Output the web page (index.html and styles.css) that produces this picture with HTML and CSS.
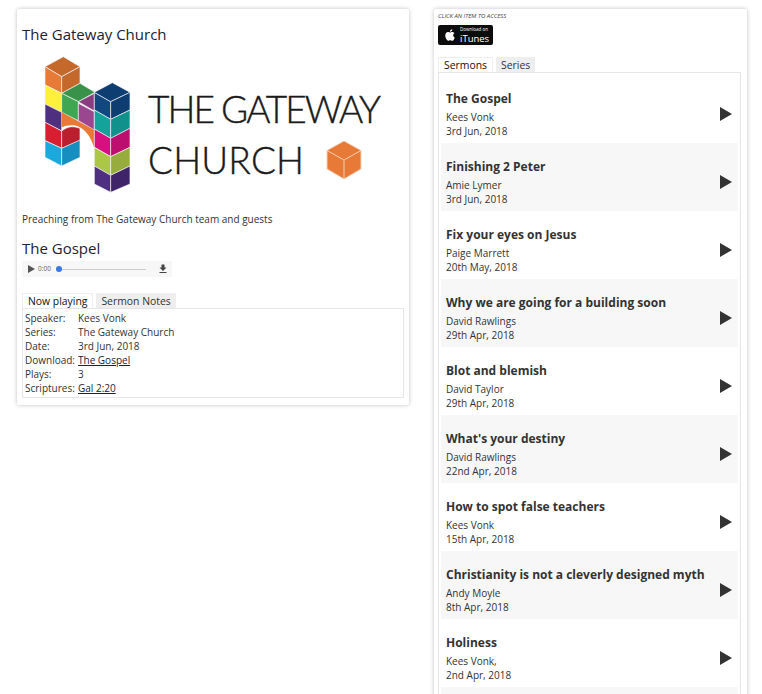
FILE: index.html
```html
<!DOCTYPE html>
<html lang="en">
<head>
    <meta charset="UTF-8">
    <meta name="viewport" content="width=device-width, initial-scale=1.0">
    <title>The Gateway Church - Sermons</title>
    <link rel="stylesheet" href="styles.css">
</head>
<body>
<div class="page">

    <div class="panel now-panel">
        <h2 class="church-title">The Gateway Church</h2>
        <svg class="logo" viewBox="0 0 382 146" width="382" height="146">
            <g transform="translate(13 0) scale(.3333)" stroke="#f4f4f4" stroke-width="2" stroke-linejoin="round">
                <polygon fill="#c4682c" points="30,50 85,20 135,50 80,80"/>
                <polygon fill="#e67a36" points="30,50 80,80 80,130 30,105"/>
                <polygon fill="#c4682c" points="80,80 135,50 135,100 80,130"/>
                <polygon fill="#fff03c" points="30,105 80,130 80,187 30,162"/>
                <polygon fill="#4e2f80" points="30,162 80,187 80,243 30,217"/>
                <polygon fill="#d71f31" points="30,217 80,243 80,295 30,272"/>
                <polygon fill="#1aa9dc" points="30,272 80,295 80,348 30,322"/>
                <path fill="#bb1e2c" d="M80 243 Q105 222 135 235 V272 L80 295 Z"/>
                <polygon fill="#168fc0" points="80,295 135,270 135,322 80,348"/>
                <polygon fill="#38924a" points="80,130 135,100 180,127 130,155"/>
                <polygon fill="#3fa651" points="80,130 130,155 130,212 80,187"/>
                <polygon fill="#8a3c80" points="130,155 178,130 178,183"/>
                <polygon fill="#9b478f" points="130,160 178,185 178,240 130,212"/>
                <path fill="#e67a36" stroke="none" d="M80 187 L178 240 V295 Q160 235 118 226 Q95 224 80 232 Z"/>
                <polygon fill="#12487f" points="178,127 227,155 227,208 178,180"/>
                <polygon fill="#0e3d71" points="178,127 232,98 285,127 227,155"/>
                <polygon fill="#0e3d71" points="227,155 285,127 285,180 227,208"/>
                <polygon fill="#14a39a" points="178,180 227,208 227,265 178,237"/>
                <polygon fill="#10918b" points="227,208 285,180 285,235 227,265"/>
                <polygon fill="#d80f7f" points="178,237 227,265 227,320 178,292"/>
                <polygon fill="#bb0e6e" points="227,265 285,235 285,292 227,320"/>
                <polygon fill="#abc746" points="178,292 227,320 227,376 178,348"/>
                <polygon fill="#96ad3e" points="227,320 285,292 285,348 227,376"/>
                <polygon fill="#4e2f80" points="178,348 227,376 227,427 178,402"/>
                <polygon fill="#3f2469" points="227,376 285,348 285,402 227,427"/>
            </g>
            <text class="logo-text" x="126" y="73" textLength="233">THE GATEWAY</text>
            <text class="logo-text" x="126" y="124" textLength="156">CHURCH</text>
            <g stroke="#f6cfb4" stroke-width="1" stroke-linejoin="round" fill="#e67a36">
                <polygon points="322,91 339,100.5 339,119 322,129 305,119 305,100.5"/>
                <path fill="none" d="M305 100.5 L322 110 L339 100.5 M322 110 V129"/>
            </g>
        </svg>
        <p class="blurb">Preaching from The Gateway Church team and guests</p>
        <h2 class="sermon-title">The Gospel</h2>
        <div class="player">
            <svg class="player-play" viewBox="0 0 8 9" width="7" height="8"><polygon points="0,0 8,4.5 0,9"/></svg>
            <span class="player-time">0:00</span>
            <div class="player-track"><span class="player-knob"></span></div>
            <svg class="player-dl" viewBox="0 0 24 24" width="12" height="12"><path d="M19 9h-4V3H9v6H5l7 7 7-7zM5 18v2h14v-2H5z"/></svg>
        </div>
        <div class="tabs now-tabs">
            <span class="tab active">Now playing</span>
            <span class="tab">Sermon Notes</span>
        </div>
        <div class="tab-body details">
            <table>
                <tr><td>Speaker:</td><td>Kees Vonk</td></tr>
                <tr><td>Series:</td><td>The Gateway Church</td></tr>
                <tr><td>Date:</td><td>3rd Jun, 2018</td></tr>
                <tr><td>Download:</td><td><a href="#">The Gospel</a></td></tr>
                <tr><td>Plays:</td><td>3</td></tr>
                <tr><td>Scriptures:</td><td><a href="#">Gal 2:20</a></td></tr>
            </table>
        </div>
    </div>

    <div class="panel list-panel">
        <div class="hint">CLICK AN ITEM TO ACCESS</div>
        <a class="itunes" href="#">
            <svg viewBox="0 0 24 24" width="14" height="14"><path d="M18.71 19.5c-.83 1.24-1.71 2.45-3.05 2.47-1.34.03-1.77-.79-3.29-.79-1.53 0-2 .77-3.27.82-1.31.05-2.3-1.32-3.14-2.53C4.25 17 2.94 12.45 4.7 9.39c.87-1.52 2.43-2.48 4.12-2.51 1.28-.02 2.5.87 3.29.87.78 0 2.26-1.07 3.81-.91.65.03 2.47.26 3.64 1.98-.09.06-2.17 1.28-2.15 3.81.03 3.02 2.65 4.03 2.68 4.04-.03.07-.42 1.44-1.38 2.83M13 3.5c.73-.83 1.94-1.46 2.94-1.5.13 1.17-.34 2.35-1.04 3.19-.69.85-1.83 1.51-2.95 1.42-.15-1.15.41-2.35 1.05-3.11z"/></svg>
            <span class="itunes-text"><small>Download on</small><b>iTunes</b></span>
        </a>
        <div class="tabs list-tabs">
            <span class="tab active">Sermons</span>
            <span class="tab">Series</span>
        </div>
        <div class="tab-body sermons">
            <div class="sermon"><div><h3>The Gospel</h3><p>Kees Vonk</p><p>3rd Jun, 2018</p></div><span class="play"></span></div>
            <div class="sermon"><div><h3>Finishing 2 Peter</h3><p>Amie Lymer</p><p>3rd Jun, 2018</p></div><span class="play"></span></div>
            <div class="sermon"><div><h3>Fix your eyes on Jesus</h3><p>Paige Marrett</p><p>20th May, 2018</p></div><span class="play"></span></div>
            <div class="sermon"><div><h3>Why we are going for a building soon</h3><p>David Rawlings</p><p>29th Apr, 2018</p></div><span class="play"></span></div>
            <div class="sermon"><div><h3>Blot and blemish</h3><p>David Taylor</p><p>29th Apr, 2018</p></div><span class="play"></span></div>
            <div class="sermon"><div><h3>What's your destiny</h3><p>David Rawlings</p><p>22nd Apr, 2018</p></div><span class="play"></span></div>
            <div class="sermon"><div><h3>How to spot false teachers</h3><p>Kees Vonk</p><p>15th Apr, 2018</p></div><span class="play"></span></div>
            <div class="sermon"><div><h3>Christianity is not a cleverly designed myth</h3><p>Andy Moyle</p><p>8th Apr, 2018</p></div><span class="play"></span></div>
            <div class="sermon"><div><h3>Holiness</h3><p>Kees Vonk,</p><p>2nd Apr, 2018</p></div><span class="play"></span></div>
            <div class="sermon"></div>
        </div>
    </div>

</div>
</body>
</html>
```

FILE: styles.css
```css
html, body { margin: 0; padding: 0; height: 100%; overflow: hidden; background: #fff; }
body { font-family: "Open Sans", sans-serif; font-size: 10px; line-height: 14px; color: #333; }
h2, h3, p { margin: 0; font-weight: normal; }

.page { display: flex; align-items: flex-start; padding: 9px 0 0 17px; gap: 25px; height: 685px; overflow: hidden; }
.panel { background: #fff; border-radius: 2px; box-shadow: 0 0 4px rgba(0, 0, 0, .25); box-sizing: border-box; }

/* left side */
.now-panel { width: 392px; height: 396px; padding: 15px 5px 0; }
.church-title { font-size: 15px; line-height: 20px; color: #223; }
.logo { display: block; margin-top: 6px; }
.logo-text { font-family: "Lato", sans-serif; font-weight: 300; font-size: 37px; fill: #1a1a1a; stroke: #1a1a1a; stroke-width: .4px; }
.blurb { margin-top: 16px; }
.sermon-title { margin-top: 12px; font-size: 15px; line-height: 20px; color: #223; }

.player { display: flex; align-items: center; width: 150px; height: 16px; margin-top: 3px; background: #f7f7f7; box-sizing: border-box; padding: 0 3px 0 6px; }
.player-play { fill: #555; flex: none; }
.player-time { font-size: 6.5px; color: #666; margin-left: 3px; width: 11px; line-height: 16px; flex: none; }
.player-track { position: relative; height: 1px; width: 90px; margin-left: 7px; background: #ccc; flex: none; }
.player-knob { position: absolute; left: 0; top: -3px; width: 6px; height: 6px; border-radius: 50%; background: #3b78e7; }
.player-dl { fill: #444; margin-left: 11px; flex: none; }

.tabs { display: flex; gap: 3px; }
.now-tabs { margin-top: 16px; }
.tab { padding: 0 5px; height: 15px; line-height: 16px; background: #eee; color: #333; font-size: 10.4px; }
.tab.active { background: #fff; color: #111; border: 1px solid #eee; border-bottom: 0; height: 14px; line-height: 15px; }
.tab-body { border: 1px solid #e6e6e6; box-sizing: border-box; }
.details { height: 90px; padding: 2px; }
.details table { border-collapse: collapse; }
.details td { padding: 0 3px 0 0; height: 14px; }
.details a { color: #223; }

/* right side */
.list-panel { width: 313px; height: 700px; padding: 3px 6px 0 4px; }
.hint { font-size: 6px; line-height: 9px; font-style: italic; color: #444; }
.itunes { display: flex; align-items: center; width: 55px; height: 20px; margin-top: 4px; background: #0c0c0c; border-radius: 2px; color: #fff; text-decoration: none; box-sizing: border-box; padding-left: 5px; }
.itunes svg { fill: #fff; flex: none; }
.itunes-text { display: flex; flex-direction: column; gap: 1.5px; margin-left: 3px; }
.itunes-text small { font-size: 4.5px; line-height: 6px; }
.itunes-text b { font-weight: normal; font-size: 9.5px; line-height: 10px; }

.list-tabs { margin-top: 12px; }
.sermons { padding: 2px 2px 0; }
.sermon { display: flex; justify-content: space-between; height: 68px; padding: 16px 6px 0 5px; box-sizing: border-box; }
.sermon:nth-child(even) { background: #f7f7f7; }
.sermon h3 { font-size: 12px; line-height: 16px; font-weight: 700; color: #333; margin-bottom: 3px; }
.play { align-self: center; margin-bottom: 7px; width: 0; height: 0; border-style: solid; border-width: 7px 0 7px 12.5px; border-color: transparent transparent transparent #333; flex: none; }
```
